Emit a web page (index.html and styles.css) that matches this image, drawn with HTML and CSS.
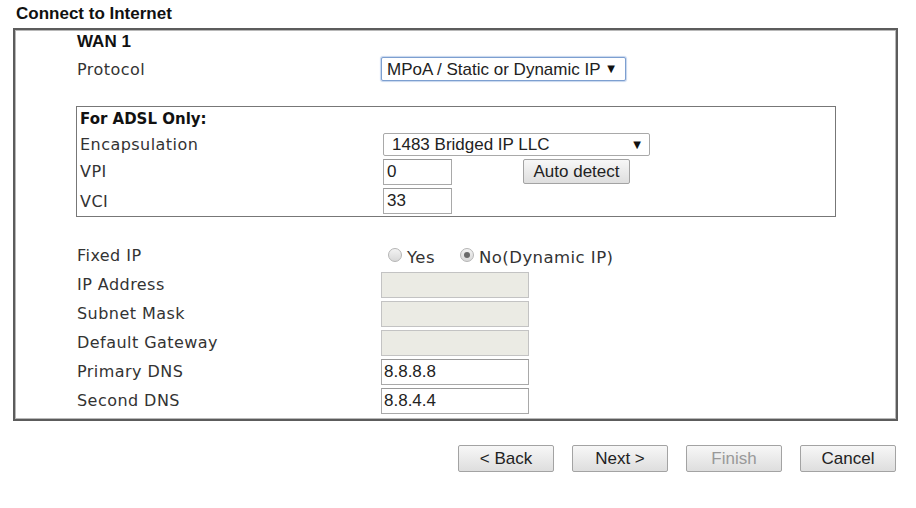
FILE: index.html
```html
<!DOCTYPE html>
<html lang="en">
<head>
  <meta charset="UTF-8">
  <meta name="viewport" content="width=device-width, initial-scale=1.0">
  <title>Connect to Internet</title>
  <link rel="stylesheet" href="styles.css">
</head>
<body>

  <div class="page">
    <div class="title">Connect to Internet</div>

    <div class="panel">
      <div class="row row-head">WAN 1</div>
      <div class="row row-protocol">
        <span class="label">Protocol</span>
        <span class="select-wrap select-protocol">
          <select><option>MPoA / Static or Dynamic IP</option></select>
        </span>
      </div>

      <!-- Bloc ADSL -->
      <div class="adsl">
        <div class="row adsl-head">For ADSL Only:</div>
        <div class="row row-encap">
          <span class="label">Encapsulation</span>
          <span class="select-wrap select-encap">
            <select><option>1483 Bridged IP LLC</option></select>
          </span>
        </div>
        <div class="row row-adsl">
          <span class="label">VPI</span>
          <input type="text" class="field field-small" value="0">
          <button type="button" class="btn btn-detect">Auto detect</button>
        </div>
        <div class="row row-adsl row-last">
          <span class="label">VCI</span>
          <input type="text" class="field field-small" value="33">
        </div>
      </div>

      <div class="ip-list">
        <div class="row">
          <span class="label">Fixed IP</span>
          <label class="radio"><input type="radio" name="fixed"> Yes</label>
          <label class="radio radio-no"><input type="radio" name="fixed" checked> No(Dynamic IP)</label>
        </div>
        <div class="row">
          <span class="label">IP Address</span>
          <input type="text" class="field" disabled>
        </div>
        <div class="row">
          <span class="label">Subnet Mask</span>
          <input type="text" class="field" disabled>
        </div>
        <div class="row">
          <span class="label">Default Gateway</span>
          <input type="text" class="field" disabled>
        </div>
        <div class="row">
          <span class="label">Primary DNS</span>
          <input type="text" class="field" value="8.8.8.8">
        </div>
        <div class="row">
          <span class="label">Second DNS</span>
          <input type="text" class="field" value="8.8.4.4">
        </div>
      </div>
    </div>

    <div class="buttons">
      <button type="button" class="btn">&lt; Back</button>
      <button type="button" class="btn">Next &gt;</button>
      <button type="button" class="btn" disabled>Finish</button>
      <button type="button" class="btn">Cancel</button>
    </div>
  </div>

</body>
</html>
```

FILE: styles.css
```css
body {
  margin: 0;
  background-color: #ffffff;
  color: #222;
  font-family: "DejaVu Sans", Verdana, sans-serif;
  font-size: 16px;
}

.page {
  padding: 4px 0 0 13px;
  width: 885px;
}

.title {
  font-family: "Liberation Sans", Arial, sans-serif;
  font-weight: bold;
  font-size: 17px;
  line-height: 20px;
  padding-left: 3px;
  margin-bottom: 4px;
  color: #111;
}

.panel {
  border: 2px solid #5c5c5c;
  box-shadow: inset 0 0 0 1px #b8b8b8;
  padding: 0 0 4px 62px;
  box-sizing: border-box;
  width: 885px;
}

.row {
  display: flex;
  align-items: center;
  height: 29px;
}

.label {
  width: 304px;
  flex-shrink: 0;
  color: #333;
  letter-spacing: 0.45px;
}

.row-head {
  height: 24px;
  font-family: "Liberation Sans", Arial, sans-serif;
  font-weight: bold;
  font-size: 17px;
  color: #111;
}

.row-protocol {
  height: 30px;
  margin-bottom: 22px;
}

/* Bloc ADSL */
.adsl {
  border: 1px solid #777;
  width: 760px;
  box-sizing: border-box;
  margin-left: -1px;
  padding-left: 3px;
}

.adsl .label {
  width: 303px;
}

.adsl-head {
  height: 24px;
  font-weight: bold;
  font-size: 15px;
  color: #111;
}

.row-encap {
  height: 26px;
}

.row-last {
  height: 30px;
}

.ip-list {
  margin-top: 24px;
}

/* Selects */
.select-wrap {
  position: relative;
  display: inline-block;
}

.select-wrap select {
  appearance: none;
  -webkit-appearance: none;
  font-family: "Liberation Sans", Arial, sans-serif;
  font-size: 17px;
  color: #222;
  background-color: #fff;
  height: 24px;
  padding: 0 0 0 5px;
  margin: 0;
  box-sizing: border-box;
  border-radius: 2px;
}

.select-wrap::after {
  content: "\25BC";
  position: absolute;
  top: 6px;
  font-size: 10px;
  color: #111;
  pointer-events: none;
}

.select-protocol select {
  width: 245px;
  border: 1px solid #7d9fd0;
  box-shadow: 0 0 1px 1px #c6d6ee;
}

.select-protocol::after {
  right: 11px;
}

.select-encap select {
  width: 267px;
  height: 23px;
  padding-left: 8px;
  border: 1px solid #a9a9a9;
}

.select-encap::after {
  right: 9px;
}

/* Inputs */
.field {
  width: 148px;
  height: 26px;
  box-sizing: border-box;
  border: 1px solid #a9a9a9;
  border-top-color: #999;
  padding: 0 2px;
  margin: 0;
  font-family: "Liberation Sans", Arial, sans-serif;
  font-size: 17px;
  color: #222;
  background-color: #fff;
}

.field:disabled {
  background-color: #ebebe4;
  border-color: #c3c3c3;
}

.field-small {
  width: 69px;
  padding-left: 3px;
}

/* Radios */
.radio {
  display: inline-flex;
  align-items: center;
  margin-left: 7px;
  padding-top: 3px;
  font-size: 16.5px;
  letter-spacing: 0.45px;
  color: #333;
}

.radio-no {
  margin-left: 25px;
}

.radio input {
  appearance: none;
  -webkit-appearance: none;
  width: 14px;
  height: 14px;
  margin: -4px 5px 0 0;
  border: 1px solid #b5b5b5;
  border-radius: 50%;
  background: linear-gradient(#f3f3f3, #d8d8d8);
  box-sizing: border-box;
  position: relative;
}

.radio input:checked::after {
  content: "";
  position: absolute;
  left: 3px;
  top: 3px;
  width: 6px;
  height: 6px;
  border-radius: 50%;
  background-color: #6a6a6a;
}

/* Botons */
.btn {
  width: 96px;
  height: 27px;
  padding: 0;
  font-family: "Liberation Sans", Arial, sans-serif;
  font-size: 17px;
  color: #222;
  background: linear-gradient(#f7f7f7, #dedede);
  border: 1px solid #a3a3a3;
  border-radius: 2px;
  cursor: pointer;
}

.btn:disabled {
  color: #999;
  cursor: default;
}

.btn-detect {
  width: 107px;
  height: 25px;
  margin-left: 71px;
}

.buttons {
  display: flex;
  justify-content: flex-end;
  gap: 18px;
  margin-top: 24px;
  width: 883px;
}
```
